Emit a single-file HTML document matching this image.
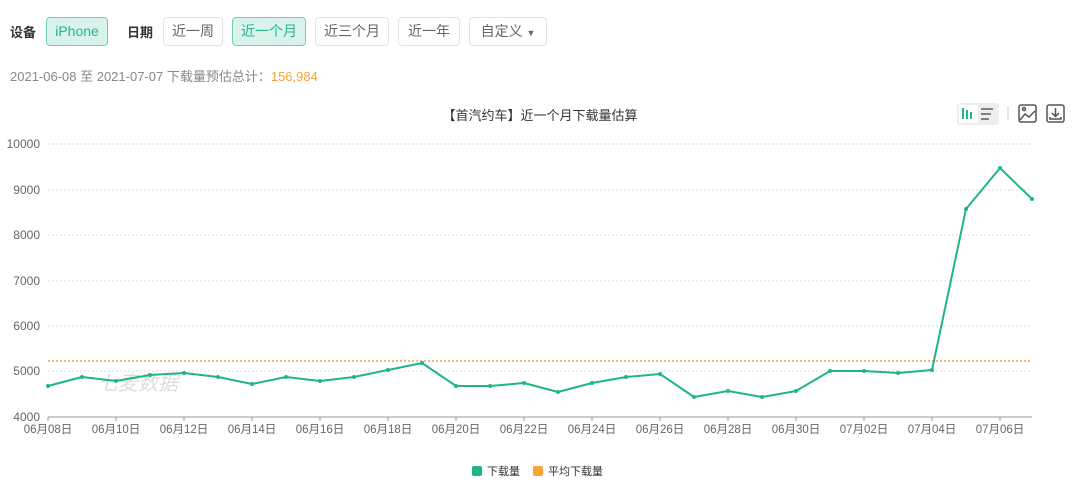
<!DOCTYPE html><html><head><meta charset="utf-8"><style>
body{margin:0;width:1080px;height:483px;background:#fff;font-family:"Liberation Sans","Noto Sans CJK SC",sans-serif;position:relative;overflow:hidden}
.a{position:absolute}
.lbl{font-size:13px;font-weight:bold;color:#333;top:22px}
.btn{position:absolute;top:17px;border:1px solid #e4e4e4;border-radius:4px;font-size:14px;color:#666;line-height:27px;text-align:center;box-sizing:border-box;height:29px}
.on{background:#d9f3ec;border-color:#6fd0b4;color:#22b78c}
</style></head><body>
<div class="a lbl" style="left:10px">设备</div>
<div class="btn on" style="left:46px;width:62px">iPhone</div>
<div class="a lbl" style="left:127px">日期</div>
<div class="btn" style="left:163px;width:60px">近一周</div>
<div class="btn on" style="left:232px;width:74px">近一个月</div>
<div class="btn" style="left:315px;width:74px">近三个月</div>
<div class="btn" style="left:398px;width:62px">近一年</div>
<div class="btn" style="left:469px;width:78px">自定义 <span style="font-size:9px">▼</span></div>
<div class="a" style="left:10px;top:66px;font-size:13px;color:#888">2021-06-08 至 2021-07-07 下载量预估总计：<span style="color:#f7a23b">156,984</span></div>
<div class="a" style="left:0;width:1080px;top:105px;text-align:center;font-size:13px;color:#333">【首汽约车】近一个月下载量估算</div>
<div class="a" style="left:957px;top:103px;width:42px;height:22px;background:#eee;border-radius:3px"></div>
<div class="a" style="left:959px;top:105px;width:19px;height:18px;background:#fff"></div>
<svg class="a" style="left:0;top:0" width="1080" height="483">
<g fill="#22b78c"><rect x="962" y="108" width="2" height="11"/><rect x="966" y="110" width="2" height="9"/><rect x="970" y="112" width="2" height="7"/></g>
<g stroke="#666" stroke-width="1.6"><line x1="981" y1="109" x2="993" y2="109"/><line x1="981" y1="114" x2="991" y2="114"/><line x1="981" y1="119" x2="989" y2="119"/></g>
<line x1="1008" y1="106" x2="1008" y2="120" stroke="#ccc"/>
<g fill="none" stroke="#555" stroke-width="1.5"><rect x="1019" y="105" width="17" height="17" rx="2"/><path d="M1020 120l5-6 4 3 6-6"/><circle cx="1024" cy="109" r="1.5"/>
<rect x="1047" y="105" width="17" height="17" rx="2"/><path d="M1055.5 108v8M1052 113l3.5 3.5 3.5-3.5M1050 117v2h11v-2"/></g>
<g stroke="#ddd" stroke-dasharray="2,2"><line x1="48" x2="1032" y1="144" y2="144"/><line x1="48" x2="1032" y1="190" y2="190"/><line x1="48" x2="1032" y1="235" y2="235"/><line x1="48" x2="1032" y1="281" y2="281"/><line x1="48" x2="1032" y1="326" y2="326"/><line x1="48" x2="1032" y1="371" y2="371"/></g>
<line x1="48" x2="1032" y1="417" y2="417" stroke="#999"/>
<g font-size="12" fill="#666" text-anchor="end"><text x="40" y="148">10000</text><text x="40" y="194">9000</text><text x="40" y="239">8000</text><text x="40" y="285">7000</text><text x="40" y="330">6000</text><text x="40" y="375">5000</text><text x="40" y="421">4000</text></g>
<g font-size="11.5" fill="#666" text-anchor="middle"><text x="48" y="433">06月08日</text><text x="116" y="433">06月10日</text><text x="184" y="433">06月12日</text><text x="252" y="433">06月14日</text><text x="320" y="433">06月16日</text><text x="388" y="433">06月18日</text><text x="456" y="433">06月20日</text><text x="524" y="433">06月22日</text><text x="592" y="433">06月24日</text><text x="660" y="433">06月26日</text><text x="728" y="433">06月28日</text><text x="796" y="433">06月30日</text><text x="864" y="433">07月02日</text><text x="932" y="433">07月04日</text><text x="1000" y="433">07月06日</text></g>
<g stroke="#999"><line x1="48" x2="48" y1="417" y2="421"/><line x1="116" x2="116" y1="417" y2="421"/><line x1="184" x2="184" y1="417" y2="421"/><line x1="252" x2="252" y1="417" y2="421"/><line x1="320" x2="320" y1="417" y2="421"/><line x1="388" x2="388" y1="417" y2="421"/><line x1="456" x2="456" y1="417" y2="421"/><line x1="524" x2="524" y1="417" y2="421"/><line x1="592" x2="592" y1="417" y2="421"/><line x1="660" x2="660" y1="417" y2="421"/><line x1="728" x2="728" y1="417" y2="421"/><line x1="796" x2="796" y1="417" y2="421"/><line x1="864" x2="864" y1="417" y2="421"/><line x1="932" x2="932" y1="417" y2="421"/><line x1="1000" x2="1000" y1="417" y2="421"/></g>
<text x="98" y="390" font-size="20" fill="#ddd" font-style="italic">七麦数据</text>
<line x1="48" x2="1032" y1="361" y2="361" stroke="#f7a23b" stroke-width="1.5" stroke-dasharray="2,2"/>
<polyline fill="none" stroke="#1fb589" stroke-width="2" stroke-linejoin="round" points="48,386 82,377 116,381 150,375 184,373 218,377 252,384 286,377 320,381 354,377 388,370 422,363 456,386 490,386 524,383 558,392 592,383 626,377 660,374 694,397 728,391 762,397 796,391 830,371 864,371 898,373 932,370 966,209 1000,168 1032,199"/>
<g fill="#1fb589"><circle cx="48" cy="386" r="2"/><circle cx="82" cy="377" r="2"/><circle cx="116" cy="381" r="2"/><circle cx="150" cy="375" r="2"/><circle cx="184" cy="373" r="2"/><circle cx="218" cy="377" r="2"/><circle cx="252" cy="384" r="2"/><circle cx="286" cy="377" r="2"/><circle cx="320" cy="381" r="2"/><circle cx="354" cy="377" r="2"/><circle cx="388" cy="370" r="2"/><circle cx="422" cy="363" r="2"/><circle cx="456" cy="386" r="2"/><circle cx="490" cy="386" r="2"/><circle cx="524" cy="383" r="2"/><circle cx="558" cy="392" r="2"/><circle cx="592" cy="383" r="2"/><circle cx="626" cy="377" r="2"/><circle cx="660" cy="374" r="2"/><circle cx="694" cy="397" r="2"/><circle cx="728" cy="391" r="2"/><circle cx="762" cy="397" r="2"/><circle cx="796" cy="391" r="2"/><circle cx="830" cy="371" r="2"/><circle cx="864" cy="371" r="2"/><circle cx="898" cy="373" r="2"/><circle cx="932" cy="370" r="2"/><circle cx="966" cy="209" r="2"/><circle cx="1000" cy="168" r="2"/><circle cx="1032" cy="199" r="2"/></g>
<rect x="472" y="466" width="10" height="10" rx="2" fill="#1fb589"/><text x="487" y="475" font-size="11" fill="#333">下载量</text>
<rect x="533" y="466" width="10" height="10" rx="2" fill="#f7a23b"/><text x="548" y="475" font-size="11" fill="#333">平均下载量</text>
</svg>
</body></html>
